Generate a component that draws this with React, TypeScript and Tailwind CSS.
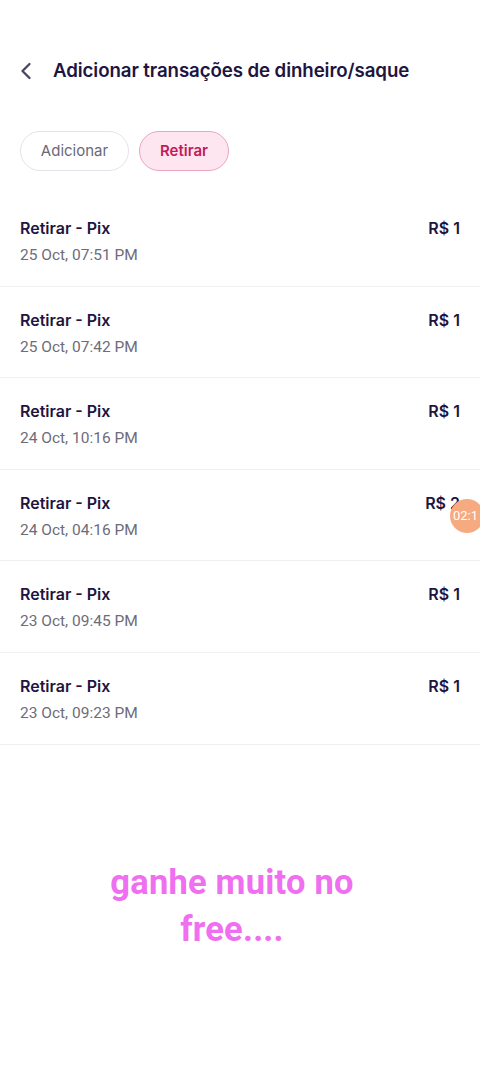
import { ChevronLeft } from "lucide-react"

const rows = [
  { date: "25 Oct, 07:51 PM", amount: "R$ 1" },
  { date: "25 Oct, 07:42 PM", amount: "R$ 1" },
  { date: "24 Oct, 10:16 PM", amount: "R$ 1" },
  { date: "24 Oct, 04:16 PM", amount: "R$ 2" },
  { date: "23 Oct, 09:45 PM", amount: "R$ 1" },
  { date: "23 Oct, 09:23 PM", amount: "R$ 1" }
]

export default function App() {
  return (
    <div className="relative min-h-[1066px] w-[480px] overflow-hidden bg-white font-['Inter',sans-serif]">
      <header className="flex h-[131px] items-start pt-[57px] pl-[12px]">
        <ChevronLeft className="h-[28px] w-[28px] text-[#4a4660]" strokeWidth={2} />
        <h1 className="ml-[13px] text-[18.7px] leading-[28px] font-semibold tracking-[-0.1px] text-[#21143e]">
          Adicionar transações de dinheiro/saque
        </h1>
      </header>

      <div className="flex gap-[10px] px-[20px]">
        <button className="h-[40px] w-[109px] rounded-full border border-[#e4e3ea] text-[15px] text-[#6a6878]">
          Adicionar
        </button>
        <button className="h-[40px] w-[90px] rounded-full border border-[#eaa5c0] bg-[#fde6ef] text-[15px] font-semibold text-[#c4195c]">
          Retirar
        </button>
      </div>

      <ul className="mt-[24px]">
        {rows.map((row) => (
          <li key={row.date} className="flex h-[91.6px] items-start justify-between border-b border-[#f0eff3] px-[20px] pt-[21px]">
            <div>
              <div className="text-[16px] leading-[24px] font-semibold text-[#21143e]">Retirar - Pix</div>
              <div className="mt-[4px] font-['Roboto',sans-serif] text-[15.5px] leading-[22px] text-[#6e6c78]">{row.date}</div>
            </div>
            <div className="text-[16px] leading-[24px] font-semibold text-[#21143e]">{row.amount}</div>
          </li>
        ))}
      </ul>

      <p className="mt-[114px] ml-[92px] w-[280px] text-center font-['Roboto',sans-serif] text-[34.5px] leading-[47px] font-bold tracking-[0.2px] text-[#ef6ff0]">
        ganhe muito no free....
      </p>

      <div className="absolute top-[499px] left-[450px] flex h-[34px] w-[34px] items-center rounded-full bg-[#f6aa80] pl-[3px] font-['Roboto',sans-serif] text-[13px] text-white">
        02:1
      </div>
    </div>
  )
}
